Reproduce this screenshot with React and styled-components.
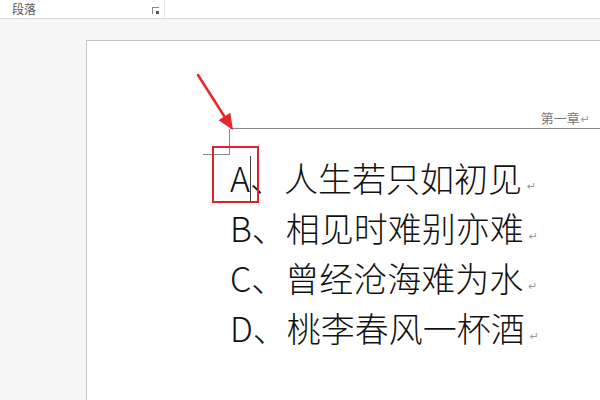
import React from 'react'
import styled, {createGlobalStyle} from 'styled-components'

const GlobalStyle = createGlobalStyle`
body{
    margin:0;
    font-family:"Noto Sans CJK SC","Noto Sans",sans-serif;
    background:#f6f6f6;
}
`;

const lines = [
    {label:'A', text:'人生若只如初见', active:true},
    {label:'B', text:'相见时难别亦难'},
    {label:'C', text:'曾经沧海难为水'},
    {label:'D', text:'桃李春风一杯酒'},
]

export default function App() {
    return (
        <Screen>
            <GlobalStyle/>
            <Ribbon>
                <Group>
                    <GroupLabel>段落</GroupLabel>
                    <Launcher/>
                </Group>
            </Ribbon>
            <Workspace>
                <Arrow width='50' height='66' viewBox='0 0 50 66'>
                    <line x1='8' y1='7' x2='36' y2='51' stroke='#e8262b' strokeWidth='2.5' strokeLinecap='round'/>
                    <polygon points='43,62 28.5,52.3 40.3,44.7' fill='#e8262b'/>
                </Arrow>
                <Page>
                    <Header>第一章<Mark size={11}>↵</Mark></Header>
                    <Body>
                        {lines.map(line=>{
                            return <Line key={line.label}>
                                {line.active && <Highlight/>}
                                {line.label}
                                {line.active && <Caret/>}
                                、{line.text}
                                <Mark size={11} lift>↵</Mark>
                            </Line>
                        })}
                    </Body>
                </Page>
            </Workspace>
        </Screen>
    )
}

const Screen = styled.div`
width:600px;
height:400px;
overflow:hidden;
display:flex;
flex-direction:column;
`;

const Ribbon = styled.div`
height:18px;
flex:none;
background:#fff;
border-bottom:1px solid #d8d8d8;
display:flex;
`;

const Group = styled.div`
width:165px;
height:17px;
border-right:1px solid #e6e6e6;
display:flex;
align-items:center;
justify-content:space-between;
padding:0 5px 0 12px;
box-sizing:border-box;
`;

const GroupLabel = styled.span`
font-size:12px;
line-height:17px;
color:#5a5a5a;
`;

const Launcher = styled.span`
width:6px;
height:6px;
margin-top:4px;
border-left:1px solid #8a8a8a;
border-top:1px solid #8a8a8a;
position:relative;
&::after{
    content:'';
    position:absolute;
    right:0;
    bottom:0;
    width:3px;
    height:3px;
    background:#555;
}
`;

const Workspace = styled.div`
flex:1;
position:relative;
background:#f6f6f6;
padding:21px 0 0 86px;
display:flex;
`;

const Arrow = styled.svg`
position:absolute;
left:190px;
top:49px;
z-index:2;
`;

const Page = styled.div`
flex:1;
background:#fff;
border-top:1px solid #c6c6c6;
border-left:1px solid #c6c6c6;
padding-top:69px;
`;

const Header = styled.div`
margin-left:143px;
padding:0 10px 2px 0;
text-align:right;
font-size:13px;
line-height:16px;
color:#7a7a7a;
border-bottom:1px solid #8a8a8a;
`;

const Body = styled.div`
margin-left:143px;
padding-top:24px;
position:relative;
&::before{
    content:'';
    position:absolute;
    left:-27px;
    top:0;
    width:26px;
    height:25px;
    border-right:1px solid #8a8a8a;
    border-bottom:1px solid #8a8a8a;
}
`;

const Line = styled.div`
position:relative;
font-size:34px;
line-height:50px;
height:50px;
font-weight:300;
color:#111;
white-space:nowrap;
`;

const Highlight = styled.span`
position:absolute;
left:-18px;
top:-7px;
width:47px;
height:57px;
box-sizing:border-box;
border:2px solid #d9252b;
`;

const Caret = styled.span`
display:inline-block;
width:1px;
height:46px;
margin-right:-1px;
vertical-align:-10px;
background:#444;
`;

const Mark = styled.span`
font-family:"DejaVu Sans",sans-serif;
font-size:${props=>props.size}px;
line-height:1;
font-weight:400;
color:#9a9a9a;
margin-left:${props=>props.lift?'5px':'1px'};
vertical-align:${props=>props.lift?'2px':'0'};
`;
